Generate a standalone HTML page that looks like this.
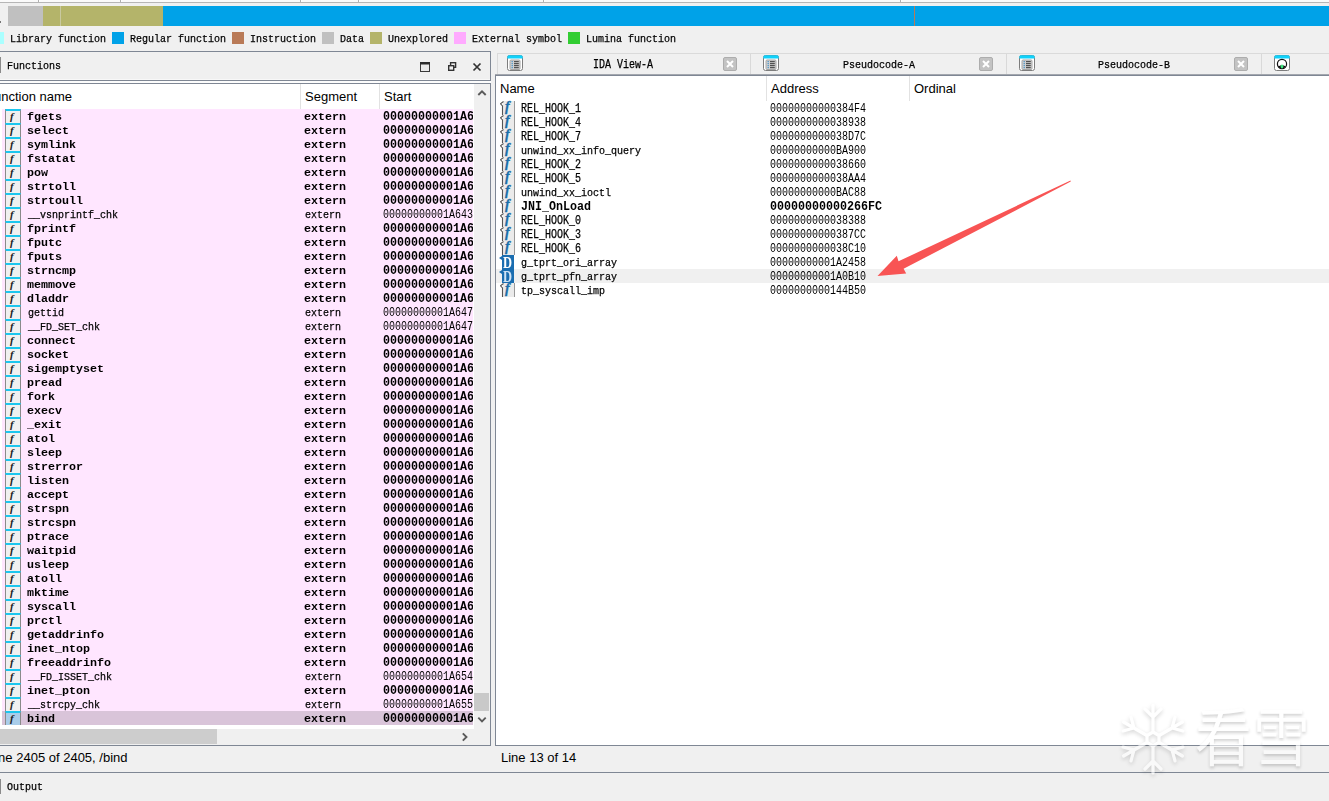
<!DOCTYPE html>
<html lang="en"><head><meta charset="utf-8"><title>IDA</title>
<style>
*{margin:0;padding:0;box-sizing:border-box}
html,body{width:1329px;height:801px;overflow:hidden}
body{position:relative;background:#f0f0f0;font-family:"Liberation Sans",sans-serif;font-size:13px;color:#000}
.a{position:absolute}
.m{font-family:"Liberation Mono",monospace;font-size:12px;line-height:14px;white-space:pre;display:block;transform-origin:0 0;transform:scaleX(.8333);color:#000}
.ui{font-family:"Liberation Sans",sans-serif;font-size:13px;line-height:16px;white-space:pre;color:#000}
/* top strip */
#strip{left:0;top:0;width:1329px;height:3px;background:#fafafa;border-bottom:1px solid #b6b6b6}
.vs{position:absolute;top:0;width:2px;height:2px;border-left:1px solid #b0b0b0;background:#fff}
/* nav bar */
#nav{left:8px;top:6px;width:1321px;height:20px;background:#00a2e8}
#nav i{position:absolute;top:0;height:20px;display:block}
/* legend */
.sw{position:absolute;top:32px;width:12px;height:12px}
.lg{position:absolute;top:32px}
/* left panel */
.hl{position:absolute;background:#7f8794}
/* list */
#lhead{left:0;top:84px;width:474px;height:25px;background:#fff}
.cs{position:absolute;width:1px;background:#e2e2e2}
#lrows{position:absolute;left:0;top:109px;width:474px;height:620px;background:#fff;overflow:hidden}
.lr{position:relative;height:14px;margin-left:2px;width:471px;background:#ffe6ff;overflow:hidden}
.lr.sel{background:#d9c4d9}
.t{position:absolute;top:1px;font-family:"Liberation Mono",monospace;font-size:12px;line-height:14px;white-space:pre;transform-origin:0 0;transform:scaleX(.8333);color:#000}
.b .t{font-family:"Liberation Mono",monospace;font-weight:bold;transform:scaleX(.9722)}
.c1{left:25.5px}.c2{left:302.5px}.c3{left:380.5px}
.lr .c1,.lr .c2,.m.lc{font-size:11px;transform:scaleX(.9091)}
.lr.b .c1,.lr.b .c2{transform:scaleX(1.0606);margin-left:-.5px}
.fi{position:absolute;left:3px;top:0;width:16px;height:14px;border-left:1px solid #8a8a8a;border-right:1px solid #8a8a8a;border-top:2px solid #1cc6ee;background:#f0f0f0;font-style:normal}
.fi em{position:absolute;left:4px;top:0;font-family:"Liberation Serif",serif;font-style:italic;font-weight:bold;font-size:11px;line-height:11px;color:#222}
.sel .fi{background:#a9cdea}
/* right list */
#rrows{position:absolute;left:496px;top:101px;width:833px;height:200px}
.rr{position:relative;height:14px;width:833px}
.rr.sel{background:#f0f0f0}
.d1{left:24.5px}.d2{left:273.5px}
.rr .lc{font-size:11px;transform:scaleX(.9091)}
.rf{position:absolute;left:4px;top:0;width:16px;height:14px;font-style:normal}
.rf:before{content:"";position:absolute;left:3px;top:0;width:11px;height:14px;background:#ebebeb;border-right:1px solid #999}
.rf svg{position:absolute;left:0;top:0}
.rf em{position:absolute;left:5px;top:-1px;font-family:"Liberation Serif",serif;font-style:italic;font-weight:bold;font-size:14px;line-height:14px;color:#1b6fa8;-webkit-text-stroke:.3px #1b6fa8}
.rd{position:absolute;left:6px;top:0;width:12px;height:14px;background:#1a6db0;font-style:normal}
.rd:before{content:"";position:absolute;left:-3px;top:1px;border-right:3px solid #1a6db0;border-top:2px solid transparent;border-bottom:2px solid transparent}
.rd em{position:absolute;left:1px;top:1px;font-family:"Liberation Serif",serif;font-style:normal;font-weight:bold;font-size:16px;line-height:14px;color:#fff;transform-origin:0 0;transform:scaleX(.78)}
.rr.sel .rd em{color:#cfe3f5}
/* tabs */
.tabicon{position:absolute;top:55px;width:16px;height:16px}
.tclose{position:absolute;top:57px;width:14px;height:14px;border:1px solid #adadad;border-radius:2px;background:#c3c3c3}
.tsep{position:absolute;top:54px;width:1px;height:20px;background:#d9d9d9}

.t,.m{-webkit-text-stroke:.25px #000}
.b .t{-webkit-text-stroke:0}
.d2,.c3{-webkit-text-stroke:0}

</style></head>
<body>
<!-- top strip -->
<div id="strip" class="a"></div>
<i class="vs" style="left:38px"></i><i class="vs" style="left:120px"></i><i class="vs" style="left:300px"></i><i class="vs" style="left:358px"></i><i class="vs" style="left:543px"></i><i class="vs" style="left:900px"></i>
<div class="a" style="left:0;top:21px;width:1px;height:2px;background:#777"></div>
<!-- navigation band -->
<div id="nav" class="a"><i style="left:0;width:35px;background:#c0c0c0"></i><i style="left:35px;width:120px;background:#b4b46a"></i><i style="left:52px;width:1px;background:#c9c9a0"></i><i style="left:906px;width:1px;background:#b97a57"></i></div>
<!-- legend -->
<i class="sw" style="left:-8px;background:#aaffff"></i><span class="lg m lc" style="left:10px">Library function</span>
<i class="sw" style="left:112px;background:#00a2e8"></i><span class="lg m lc" style="left:130px">Regular function</span>
<i class="sw" style="left:232px;background:#b97a57"></i><span class="lg m lc" style="left:250px">Instruction</span>
<i class="sw" style="left:322px;background:#c0c0c0"></i><span class="lg m lc" style="left:340px">Data</span>
<i class="sw" style="left:370px;background:#b4b46a"></i><span class="lg m lc" style="left:388px">Unexplored</span>
<i class="sw" style="left:454px;background:#ffaaff"></i><span class="lg m lc" style="left:472px">External symbol</span>
<i class="sw" style="left:568px;background:#32cd32"></i><span class="lg m lc" style="left:586px">Lumina function</span>
<!-- left dock: Functions title -->
<div class="hl" style="left:0;top:51px;width:491px;height:1px"></div>
<div class="hl" style="left:0;top:80px;width:491px;height:1px"></div>
<div class="hl" style="left:490px;top:51px;width:1px;height:30px"></div>
<div class="a" style="left:0;top:79px;width:490px;height:1px;background:#f8f8f8"></div>
<div class="a" style="left:0;top:81px;width:491px;height:2px;background:#fcfcfc"></div>
<div class="a" style="left:0;top:57px;width:1px;height:16px;background:#8a8a8a"></div>
<span class="a m lc" style="left:7px;top:59px">Functions</span>
<svg class="a" style="left:418px;top:58px" width="70" height="18" viewBox="0 0 70 18">
<rect x="2.5" y="5.5" width="9" height="8" fill="#eaeaea" stroke="#3a3a3a" stroke-width="1"/><rect x="2" y="4" width="10" height="2.5" fill="#2b2b2b"/>
<rect x="32.6" y="4.7" width="5" height="4.6" fill="none" stroke="#333" stroke-width="1.4"/><rect x="30.7" y="7.7" width="5" height="4.6" fill="#f0f0f0" stroke="#333" stroke-width="1.4"/>
<path d="M55.5 5.5 L62.5 12.5 M62.5 5.5 L55.5 12.5" stroke="#333" stroke-width="1.7" fill="none"/>
</svg>
<!-- left list frame -->
<div class="hl" style="left:0;top:83px;width:491px;height:1px"></div>
<div class="hl" style="left:490px;top:83px;width:1px;height:663px"></div>
<div class="hl" style="left:0;top:745px;width:491px;height:1px"></div>
<div id="lhead" class="a"></div>
<div class="cs" style="left:300px;top:84px;height:25px"></div><div class="cs" style="left:379px;top:84px;height:25px"></div>
<span class="a ui" style="left:-14px;top:89px">Function name</span>
<span class="a ui" style="left:305px;top:89px">Segment</span>
<span class="a ui" style="left:384px;top:89px">Start</span>
<!-- left vertical scrollbar -->
<div class="a" style="left:474px;top:84px;width:16px;height:645px;background:#f0f0f0"></div>
<div class="a" style="left:474px;top:693px;width:15px;height:18px;background:#c9c9c9"></div>
<svg class="a" style="left:474px;top:84px" width="16" height="645" viewBox="0 0 16 645"><path d="M4.3 11 L8 7.3 L11.7 11" fill="none" stroke="#5a5a5a" stroke-width="1.9"/><path d="M4.3 633.7 L8 637.4 L11.7 633.7" fill="none" stroke="#5a5a5a" stroke-width="1.9"/></svg>
<!-- right tab bar -->
<div class="a" style="left:497px;top:53px;width:832px;height:21px;border-top:1px solid #dadada;border-left:1px solid #dadada;background:#f0f0f0"></div>
<i class="tsep" style="left:750px"></i><i class="tsep" style="left:1006px"></i><i class="tsep" style="left:1261px"></i>
<span class="a m" style="left:592.5px;top:58px">IDA View-A</span>
<span class="a m lc" style="left:842.5px;top:58px">Pseudocode-A</span>
<span class="a m lc" style="left:1097.5px;top:58px">Pseudocode-B</span>
<svg class="tabicon" style="left:507px" viewBox="0 0 16 16"><rect x="0.5" y="0.5" width="15" height="15" rx="2" fill="#fff" stroke="#7d7d7d"/><path d="M0.3 3.6 V2 Q0.3 0.2 2 0.2 H14 Q15.7 0.2 15.7 2 V3.6 Z" fill="#10d2fb"/><rect x="3" y="5" width="10" height="9.5" rx="1" fill="#d2d2d2" stroke="#a5a5a5" stroke-width="1"/><path d="M7 6.7H11.8M7 8.7H11.8M7 10.7H11.8M7 12.7H11.8" stroke="#222" stroke-width="0.9"/><path d="M4.6 6.7H5.8M4.6 8.7H5.8M4.6 10.7H5.8M4.6 12.7H5.8" stroke="#0b76c2" stroke-width="0.9"/></svg>
<svg class="tabicon" style="left:763px" viewBox="0 0 16 16"><rect x="0.5" y="0.5" width="15" height="15" rx="2" fill="#fff" stroke="#7d7d7d"/><path d="M0.3 3.6 V2 Q0.3 0.2 2 0.2 H14 Q15.7 0.2 15.7 2 V3.6 Z" fill="#10d2fb"/><rect x="3" y="5" width="10" height="9.5" rx="1" fill="#d2d2d2" stroke="#a5a5a5" stroke-width="1"/><path d="M7 6.7H11.8M7 8.7H11.8M7 10.7H11.8M7 12.7H11.8" stroke="#222" stroke-width="0.9"/><path d="M4.6 6.7H5.8M4.6 8.7H5.8M4.6 10.7H5.8M4.6 12.7H5.8" stroke="#0b76c2" stroke-width="0.9"/></svg>
<svg class="tabicon" style="left:1019px" viewBox="0 0 16 16"><rect x="0.5" y="0.5" width="15" height="15" rx="2" fill="#fff" stroke="#7d7d7d"/><path d="M0.3 3.6 V2 Q0.3 0.2 2 0.2 H14 Q15.7 0.2 15.7 2 V3.6 Z" fill="#10d2fb"/><rect x="3" y="5" width="10" height="9.5" rx="1" fill="#d2d2d2" stroke="#a5a5a5" stroke-width="1"/><path d="M7 6.7H11.8M7 8.7H11.8M7 10.7H11.8M7 12.7H11.8" stroke="#222" stroke-width="0.9"/><path d="M4.6 6.7H5.8M4.6 8.7H5.8M4.6 10.7H5.8M4.6 12.7H5.8" stroke="#0b76c2" stroke-width="0.9"/></svg>
<i class="tclose" style="left:723px"><svg style="display:block" width="12" height="12" viewBox="0 0 12 12"><path d="M3 3L9 9M9 3L3 9" stroke="#fff" stroke-width="2" fill="none"/></svg></i>
<i class="tclose" style="left:979px"><svg style="display:block" width="12" height="12" viewBox="0 0 12 12"><path d="M3 3L9 9M9 3L3 9" stroke="#fff" stroke-width="2" fill="none"/></svg></i>
<i class="tclose" style="left:1234px"><svg style="display:block" width="12" height="12" viewBox="0 0 12 12"><path d="M3 3L9 9M9 3L3 9" stroke="#fff" stroke-width="2" fill="none"/></svg></i>
<svg class="tabicon" style="left:1274px" viewBox="0 0 16 16"><rect x="0.5" y="0.5" width="15" height="15" rx="2" fill="#fff" stroke="#7d7d7d"/><path d="M0.3 3.6 V2 Q0.3 0.2 2 0.2 H14 Q15.7 0.2 15.7 2 V3.6 Z" fill="#10d2fb"/><circle cx="8" cy="9" r="4.6" fill="#fff" stroke="#111" stroke-width="1.2"/><path d="M4.3 11.5 Q8 15.5 11.7 11.5 Q8 9 4.3 11.5Z" fill="#111"/><ellipse cx="8" cy="11.6" rx="1.4" ry="2" fill="#3fe27e"/></svg>
<!-- right panel frame -->
<div class="a" style="left:496px;top:76px;width:833px;height:669px;background:#fff"></div>
<div class="a" style="left:495px;top:74px;width:834px;height:1px;background:#a3a7ae"></div>
<div class="hl" style="left:495px;top:75px;width:834px;height:1px"></div>
<div class="hl" style="left:495px;top:75px;width:1px;height:671px"></div>
<div class="hl" style="left:495px;top:745px;width:834px;height:1px"></div>
<div class="cs" style="left:766px;top:76px;height:25px"></div><div class="cs" style="left:909px;top:76px;height:25px"></div>
<span class="a ui" style="left:500px;top:81px">Name</span>
<span class="a ui" style="left:771px;top:81px">Address</span>
<span class="a ui" style="left:914px;top:81px">Ordinal</span>
<div id="lrows">
<div class="lr b"><i class="fi"><em>f</em></i><span class="t c1">fgets</span><span class="t c2">extern</span><span class="t c3">00000000001A6</span></div>
<div class="lr b"><i class="fi"><em>f</em></i><span class="t c1">select</span><span class="t c2">extern</span><span class="t c3">00000000001A6</span></div>
<div class="lr b"><i class="fi"><em>f</em></i><span class="t c1">symlink</span><span class="t c2">extern</span><span class="t c3">00000000001A6</span></div>
<div class="lr b"><i class="fi"><em>f</em></i><span class="t c1">fstatat</span><span class="t c2">extern</span><span class="t c3">00000000001A6</span></div>
<div class="lr b"><i class="fi"><em>f</em></i><span class="t c1">pow</span><span class="t c2">extern</span><span class="t c3">00000000001A6</span></div>
<div class="lr b"><i class="fi"><em>f</em></i><span class="t c1">strtoll</span><span class="t c2">extern</span><span class="t c3">00000000001A6</span></div>
<div class="lr b"><i class="fi"><em>f</em></i><span class="t c1">strtoull</span><span class="t c2">extern</span><span class="t c3">00000000001A6</span></div>
<div class="lr"><i class="fi"><em>f</em></i><span class="t c1">__vsnprintf_chk</span><span class="t c2">extern</span><span class="t c3">00000000001A643</span></div>
<div class="lr b"><i class="fi"><em>f</em></i><span class="t c1">fprintf</span><span class="t c2">extern</span><span class="t c3">00000000001A6</span></div>
<div class="lr b"><i class="fi"><em>f</em></i><span class="t c1">fputc</span><span class="t c2">extern</span><span class="t c3">00000000001A6</span></div>
<div class="lr b"><i class="fi"><em>f</em></i><span class="t c1">fputs</span><span class="t c2">extern</span><span class="t c3">00000000001A6</span></div>
<div class="lr b"><i class="fi"><em>f</em></i><span class="t c1">strncmp</span><span class="t c2">extern</span><span class="t c3">00000000001A6</span></div>
<div class="lr b"><i class="fi"><em>f</em></i><span class="t c1">memmove</span><span class="t c2">extern</span><span class="t c3">00000000001A6</span></div>
<div class="lr b"><i class="fi"><em>f</em></i><span class="t c1">dladdr</span><span class="t c2">extern</span><span class="t c3">00000000001A6</span></div>
<div class="lr"><i class="fi"><em>f</em></i><span class="t c1">gettid</span><span class="t c2">extern</span><span class="t c3">00000000001A647</span></div>
<div class="lr"><i class="fi"><em>f</em></i><span class="t c1">__FD_SET_chk</span><span class="t c2">extern</span><span class="t c3">00000000001A647</span></div>
<div class="lr b"><i class="fi"><em>f</em></i><span class="t c1">connect</span><span class="t c2">extern</span><span class="t c3">00000000001A6</span></div>
<div class="lr b"><i class="fi"><em>f</em></i><span class="t c1">socket</span><span class="t c2">extern</span><span class="t c3">00000000001A6</span></div>
<div class="lr b"><i class="fi"><em>f</em></i><span class="t c1">sigemptyset</span><span class="t c2">extern</span><span class="t c3">00000000001A6</span></div>
<div class="lr b"><i class="fi"><em>f</em></i><span class="t c1">pread</span><span class="t c2">extern</span><span class="t c3">00000000001A6</span></div>
<div class="lr b"><i class="fi"><em>f</em></i><span class="t c1">fork</span><span class="t c2">extern</span><span class="t c3">00000000001A6</span></div>
<div class="lr b"><i class="fi"><em>f</em></i><span class="t c1">execv</span><span class="t c2">extern</span><span class="t c3">00000000001A6</span></div>
<div class="lr b"><i class="fi"><em>f</em></i><span class="t c1">_exit</span><span class="t c2">extern</span><span class="t c3">00000000001A6</span></div>
<div class="lr b"><i class="fi"><em>f</em></i><span class="t c1">atol</span><span class="t c2">extern</span><span class="t c3">00000000001A6</span></div>
<div class="lr b"><i class="fi"><em>f</em></i><span class="t c1">sleep</span><span class="t c2">extern</span><span class="t c3">00000000001A6</span></div>
<div class="lr b"><i class="fi"><em>f</em></i><span class="t c1">strerror</span><span class="t c2">extern</span><span class="t c3">00000000001A6</span></div>
<div class="lr b"><i class="fi"><em>f</em></i><span class="t c1">listen</span><span class="t c2">extern</span><span class="t c3">00000000001A6</span></div>
<div class="lr b"><i class="fi"><em>f</em></i><span class="t c1">accept</span><span class="t c2">extern</span><span class="t c3">00000000001A6</span></div>
<div class="lr b"><i class="fi"><em>f</em></i><span class="t c1">strspn</span><span class="t c2">extern</span><span class="t c3">00000000001A6</span></div>
<div class="lr b"><i class="fi"><em>f</em></i><span class="t c1">strcspn</span><span class="t c2">extern</span><span class="t c3">00000000001A6</span></div>
<div class="lr b"><i class="fi"><em>f</em></i><span class="t c1">ptrace</span><span class="t c2">extern</span><span class="t c3">00000000001A6</span></div>
<div class="lr b"><i class="fi"><em>f</em></i><span class="t c1">waitpid</span><span class="t c2">extern</span><span class="t c3">00000000001A6</span></div>
<div class="lr b"><i class="fi"><em>f</em></i><span class="t c1">usleep</span><span class="t c2">extern</span><span class="t c3">00000000001A6</span></div>
<div class="lr b"><i class="fi"><em>f</em></i><span class="t c1">atoll</span><span class="t c2">extern</span><span class="t c3">00000000001A6</span></div>
<div class="lr b"><i class="fi"><em>f</em></i><span class="t c1">mktime</span><span class="t c2">extern</span><span class="t c3">00000000001A6</span></div>
<div class="lr b"><i class="fi"><em>f</em></i><span class="t c1">syscall</span><span class="t c2">extern</span><span class="t c3">00000000001A6</span></div>
<div class="lr b"><i class="fi"><em>f</em></i><span class="t c1">prctl</span><span class="t c2">extern</span><span class="t c3">00000000001A6</span></div>
<div class="lr b"><i class="fi"><em>f</em></i><span class="t c1">getaddrinfo</span><span class="t c2">extern</span><span class="t c3">00000000001A6</span></div>
<div class="lr b"><i class="fi"><em>f</em></i><span class="t c1">inet_ntop</span><span class="t c2">extern</span><span class="t c3">00000000001A6</span></div>
<div class="lr b"><i class="fi"><em>f</em></i><span class="t c1">freeaddrinfo</span><span class="t c2">extern</span><span class="t c3">00000000001A6</span></div>
<div class="lr"><i class="fi"><em>f</em></i><span class="t c1">__FD_ISSET_chk</span><span class="t c2">extern</span><span class="t c3">00000000001A654</span></div>
<div class="lr b"><i class="fi"><em>f</em></i><span class="t c1">inet_pton</span><span class="t c2">extern</span><span class="t c3">00000000001A6</span></div>
<div class="lr"><i class="fi"><em>f</em></i><span class="t c1">__strcpy_chk</span><span class="t c2">extern</span><span class="t c3">00000000001A655</span></div>
<div class="lr b sel"><i class="fi"><em>f</em></i><span class="t c1">bind</span><span class="t c2">extern</span><span class="t c3">00000000001A6</span></div>
</div>
<div id="rrows">
<div class="rr"><i class="rf"><svg width="16" height="14" viewBox="0 0 16 14"><path d="M3.5 0.5 L0.5 2.8 L2.5 5 L2.5 14" fill="none" stroke="#555" stroke-width="1.1"/></svg><em>f</em></i><span class="t d1">REL_HOOK_1</span><span class="t d2">00000000000384F4</span></div>
<div class="rr"><i class="rf"><svg width="16" height="14" viewBox="0 0 16 14"><path d="M3.5 0.5 L0.5 2.8 L2.5 5 L2.5 14" fill="none" stroke="#555" stroke-width="1.1"/></svg><em>f</em></i><span class="t d1">REL_HOOK_4</span><span class="t d2">0000000000038938</span></div>
<div class="rr"><i class="rf"><svg width="16" height="14" viewBox="0 0 16 14"><path d="M3.5 0.5 L0.5 2.8 L2.5 5 L2.5 14" fill="none" stroke="#555" stroke-width="1.1"/></svg><em>f</em></i><span class="t d1">REL_HOOK_7</span><span class="t d2">0000000000038D7C</span></div>
<div class="rr"><i class="rf"><svg width="16" height="14" viewBox="0 0 16 14"><path d="M3.5 0.5 L0.5 2.8 L2.5 5 L2.5 14" fill="none" stroke="#555" stroke-width="1.1"/></svg><em>f</em></i><span class="t d1 lc">unwind_xx_info_query</span><span class="t d2">00000000000BA900</span></div>
<div class="rr"><i class="rf"><svg width="16" height="14" viewBox="0 0 16 14"><path d="M3.5 0.5 L0.5 2.8 L2.5 5 L2.5 14" fill="none" stroke="#555" stroke-width="1.1"/></svg><em>f</em></i><span class="t d1">REL_HOOK_2</span><span class="t d2">0000000000038660</span></div>
<div class="rr"><i class="rf"><svg width="16" height="14" viewBox="0 0 16 14"><path d="M3.5 0.5 L0.5 2.8 L2.5 5 L2.5 14" fill="none" stroke="#555" stroke-width="1.1"/></svg><em>f</em></i><span class="t d1">REL_HOOK_5</span><span class="t d2">0000000000038AA4</span></div>
<div class="rr"><i class="rf"><svg width="16" height="14" viewBox="0 0 16 14"><path d="M3.5 0.5 L0.5 2.8 L2.5 5 L2.5 14" fill="none" stroke="#555" stroke-width="1.1"/></svg><em>f</em></i><span class="t d1 lc">unwind_xx_ioctl</span><span class="t d2">00000000000BAC88</span></div>
<div class="rr b"><i class="rf"><svg width="16" height="14" viewBox="0 0 16 14"><path d="M3.5 0.5 L0.5 2.8 L2.5 5 L2.5 14" fill="none" stroke="#555" stroke-width="1.1"/></svg><em>f</em></i><span class="t d1">JNI_OnLoad</span><span class="t d2">00000000000266FC</span></div>
<div class="rr"><i class="rf"><svg width="16" height="14" viewBox="0 0 16 14"><path d="M3.5 0.5 L0.5 2.8 L2.5 5 L2.5 14" fill="none" stroke="#555" stroke-width="1.1"/></svg><em>f</em></i><span class="t d1">REL_HOOK_0</span><span class="t d2">0000000000038388</span></div>
<div class="rr"><i class="rf"><svg width="16" height="14" viewBox="0 0 16 14"><path d="M3.5 0.5 L0.5 2.8 L2.5 5 L2.5 14" fill="none" stroke="#555" stroke-width="1.1"/></svg><em>f</em></i><span class="t d1">REL_HOOK_3</span><span class="t d2">00000000000387CC</span></div>
<div class="rr"><i class="rf"><svg width="16" height="14" viewBox="0 0 16 14"><path d="M3.5 0.5 L0.5 2.8 L2.5 5 L2.5 14" fill="none" stroke="#555" stroke-width="1.1"/></svg><em>f</em></i><span class="t d1">REL_HOOK_6</span><span class="t d2">0000000000038C10</span></div>
<div class="rr"><i class="rd"><em>D</em></i><span class="t d1 lc">g_tprt_ori_array</span><span class="t d2">00000000001A2458</span></div>
<div class="rr sel"><i class="rd"><em>D</em></i><span class="t d1 lc">g_tprt_pfn_array</span><span class="t d2">00000000001A0B10</span></div>
<div class="rr"><i class="rf"><svg width="16" height="14" viewBox="0 0 16 14"><path d="M3.5 0.5 L0.5 2.8 L2.5 5 L2.5 14" fill="none" stroke="#555" stroke-width="1.1"/></svg><em>f</em></i><span class="t d1 lc">tp_syscall_imp</span><span class="t d2">0000000000144B50</span></div>
</div>
<!-- left horizontal scrollbar -->
<div class="a" style="left:0;top:729px;width:490px;height:16px;background:#f0f0f0"></div>
<div class="a" style="left:0;top:729px;width:217px;height:15px;background:#cdcdcd"></div>
<svg class="a" style="left:456px;top:729px" width="16" height="16" viewBox="0 0 16 16"><path d="M6.8 4.3 L10.5 8 L6.8 11.7" fill="none" stroke="#5a5a5a" stroke-width="1.9"/></svg>
<!-- status lines -->
<span class="a ui" style="left:-12px;top:750px">Line 2405 of 2405, /bind</span>
<span class="a ui" style="left:501px;top:750px">Line 13 of 14</span>
<div class="hl" style="left:0;top:772px;width:1329px;height:1px"></div>
<div class="a" style="left:0;top:779px;width:1px;height:15px;background:#8a8a8a"></div>
<span class="a m lc" style="left:7px;top:780px">Output</span>
<!-- red arrow annotation -->
<svg class="a" style="left:860px;top:170px" width="230" height="120" viewBox="860 170 230 120"><path d="M1070.5 180.5 L898.5 261.3 L896.8 255.8 L877.5 276 L906.2 273.6 L903.6 268.8 L1070.8 181.6 Z" fill="#f85454"/></svg>
<!-- watermark -->
<div class="a" id="wm" style="left:1118px;top:696px;width:200px;height:84px;opacity:.62">
<svg class="a" style="left:0;top:4px;filter:drop-shadow(0 2px 2px rgba(0,0,0,.26))" width="70" height="78" viewBox="-35 -39 70 78"><g stroke="#fff" stroke-width="3.2" stroke-linecap="round" fill="none">
<path transform="rotate(0)" d="M0 -7 V-34 M0 -22 L-8 -30 M0 -22 L8 -30"/><path transform="rotate(60)" d="M0 -7 V-34 M0 -22 L-8 -30 M0 -22 L8 -30"/><path transform="rotate(120)" d="M0 -7 V-34 M0 -22 L-8 -30 M0 -22 L8 -30"/><path transform="rotate(180)" d="M0 -7 V-34 M0 -22 L-8 -30 M0 -22 L8 -30"/><path transform="rotate(240)" d="M0 -7 V-34 M0 -22 L-8 -30 M0 -22 L8 -30"/><path transform="rotate(300)" d="M0 -7 V-34 M0 -22 L-8 -30 M0 -22 L8 -30"/>
<path d="M0 -7 L6 -3.5 L6 3.5 L0 7 L-6 3.5 L-6 -3.5 Z"/></g></svg>
<span class="a" style="left:77px;top:0;font-family:'Liberation Sans','Noto Sans CJK SC',sans-serif;font-weight:400;font-size:57px;line-height:84px;transform-origin:0 50%;transform:scaleY(1.1);color:#fff;letter-spacing:1px;text-shadow:0 2px 3px rgba(0,0,0,.3);white-space:pre">看雪</span>
</div>
</body></html>
